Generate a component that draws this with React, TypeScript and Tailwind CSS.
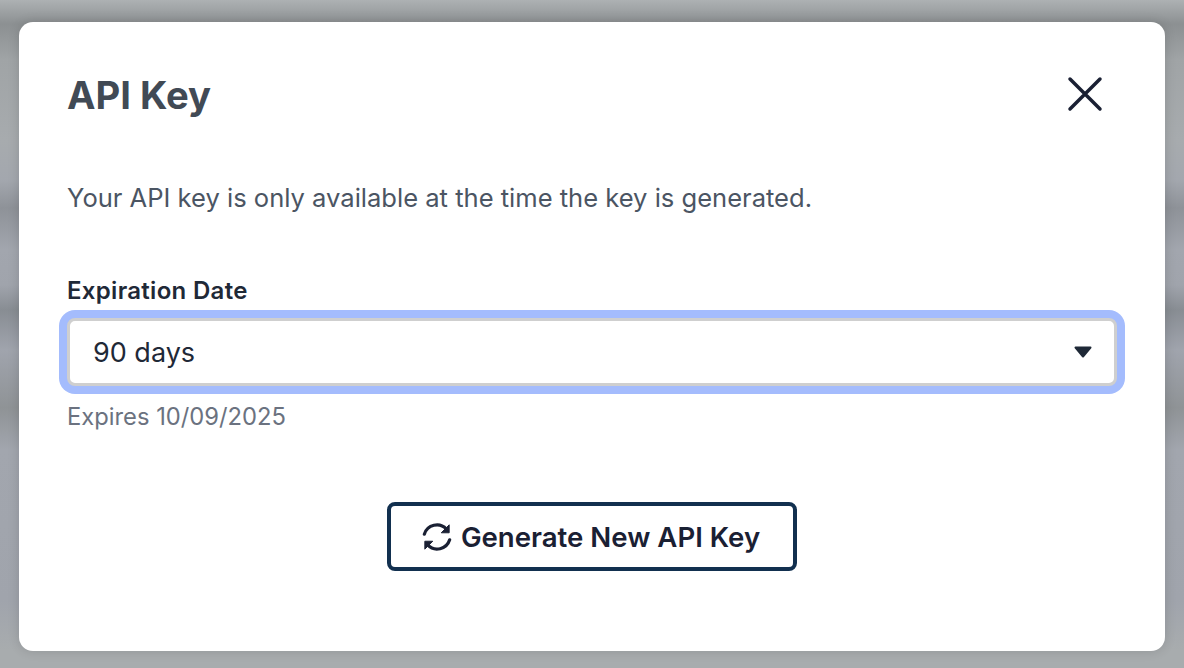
export default function App() {
  return (
    <div className="flex h-[668px] w-[1184px] overflow-hidden bg-[linear-gradient(180deg,#adb1b3_0px,#8c9092_24px,#a0a4a6_60px,#a7abae_140px,#a3a7ae_180px,#8e9298_208px,#a2a6ae_250px,#a0a4ac_285px,#888d93_310px,#a0a4ad_350px,#8f9396_408px,#a2a6ae_450px,#a0a4ac_600px,#a8acae_650px,#a8acae_668px)] pt-[22px] pl-[19px] font-['Inter','Liberation_Sans',sans-serif]">
      <div className="flex h-[629px] w-[1146px] flex-col rounded-[14px] bg-white px-[48px] pt-[48px] shadow-[0_0_12px_rgba(0,0,0,0.14)]">
        <div className="flex h-[50px] items-center justify-between">
          <h2 className="text-[38.2px] leading-[50px] font-bold text-[#414a55]">API Key</h2>
          <svg width="60" height="60" viewBox="0 0 24 24" fill="none" stroke="#1a2033" strokeWidth="1.4" strokeLinecap="round" className="mr-[2px] mb-[2px]">
            <path d="M6 6l12 12M18 6L6 18" />
          </svg>
        </div>
        <p className="mt-[60px] text-[25.55px] leading-[36px] text-[#4b5563]">Your API key is only available at the time the key is generated.</p>
        <label className="mt-[57px] text-[24px] leading-[36px] font-semibold tracking-[0.3px] text-[#1f2937]">Expiration Date</label>
        <div className="mt-[9px] flex h-[68px] items-center justify-between rounded-[8px] border-[3px] border-[#cfcfcf] bg-white pl-[23px] pr-[22px] text-[27px] text-[#1f2937] shadow-[0_0_0_8px_#a4bcfd]">
          <span className="pt-[2px]">90 days</span>
          <svg width="18" height="12" viewBox="0 0 18 12"><path d="M1.5 1.5h15L9 10.5z" fill="#1f2937" stroke="#1f2937" strokeWidth="2" strokeLinejoin="round" /></svg>
        </div>
        <p className="mt-[16px] text-[23.75px] leading-[30px] text-[#6b7280]">Expires 10/09/2025</p>
        <div className="mt-[70px] flex justify-center">
          <button className="flex h-[69px] w-[410px] items-center justify-center gap-[9px] rounded-[8px] border-[4px] border-[#12304f] bg-white pr-[2px] text-[27.6px] font-semibold text-[#1a2033]">
            <svg width="30" height="30" viewBox="5 5 32 32" className="shrink-0">
              <g>
                <path d="M7.5 18A14 14 0 0 1 31 12.5" fill="none" stroke="#1a2033" strokeWidth="3.4" strokeLinecap="round" />
                <path d="M34 8v8.5h-8.5z" fill="#1a2033" stroke="#1a2033" strokeWidth="1" strokeLinejoin="round" />
              </g>
              <g transform="rotate(180 21 21)">
                <path d="M7.5 18A14 14 0 0 1 31 12.5" fill="none" stroke="#1a2033" strokeWidth="3.4" strokeLinecap="round" />
                <path d="M34 8v8.5h-8.5z" fill="#1a2033" stroke="#1a2033" strokeWidth="1" strokeLinejoin="round" />
              </g>
            </svg>
            <span className="pt-[2px]">Generate New API Key</span>
          </button>
        </div>
      </div>
    </div>
  );
}
